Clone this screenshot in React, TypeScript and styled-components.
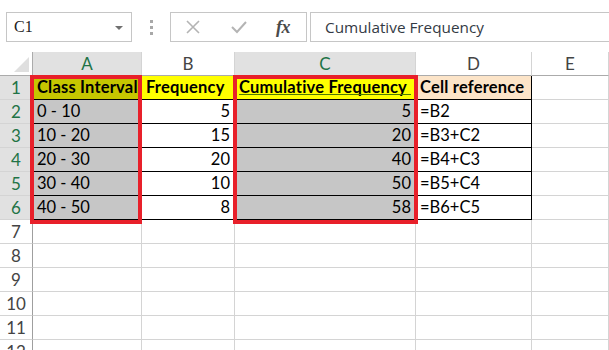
import React from "react";
import styled, { createGlobalStyle, css } from "styled-components";

const GlobalStyle = createGlobalStyle`
  html, body {
    margin: 0;
    padding: 0;
    background: #ffffff;
    overflow: hidden;
  }
  body {
    font-family: Lato, "Liberation Sans", sans-serif;
  }
`;

type Row = { interval: string; freq: number; cum: number; ref: string };

const rows: Row[] = [
  { interval: "0 - 10", freq: 5, cum: 5, ref: "=B2" },
  { interval: "10 - 20", freq: 15, cum: 20, ref: "=B3+C2" },
  { interval: "20 - 30", freq: 20, cum: 40, ref: "=B4+C3" },
  { interval: "30 - 40", freq: 10, cum: 50, ref: "=B5+C4" },
  { interval: "40 - 50", freq: 8, cum: 58, ref: "=B6+C5" },
];

const columns = ["A", "B", "C", "D", "E"];
const selectedCols = ["A", "C"];
const TOTAL_ROWS = 12;

const App = () => {
  return (
    <Page>
      <GlobalStyle />
      <FormulaBar>
        <NameBox>
          <span>C1</span>
          <DropArrow />
        </NameBox>
        <Grip>
          <i />
          <i />
          <i />
        </Grip>
        <Buttons>
          <svg width="16" height="16" viewBox="0 0 16 16">
            <path d="M2 2 L14 14 M14 2 L2 14" stroke="#b4b4b4" strokeWidth="1.6" fill="none" />
          </svg>
          <svg width="18" height="16" viewBox="0 0 18 16">
            <path d="M2 8 L7 13 L16 3" stroke="#b4b4b4" strokeWidth="2" fill="none" />
          </svg>
          <Fx>fx</Fx>
        </Buttons>
        <FormulaInput>Cumulative Frequency</FormulaInput>
      </FormulaBar>

      <Sheet>
        <Grid>
          <Corner />
          {columns.map((c) => (
            <ColHead key={c} $selected={selectedCols.includes(c)}>
              {c}
            </ColHead>
          ))}

          <RowHead $selected>1</RowHead>
          <Cell $bg="#c6c600" $bold $boxed>Class Interval</Cell>
          <Cell $bg="#ffff00" $bold $boxed>Frequency</Cell>
          <Cell $bg="#ffff00" $bold $boxed $underline>Cumulative Frequency</Cell>
          <Cell $bg="#fce4c8" $bold $boxed>Cell reference</Cell>
          <Cell />

          {rows.map((r, i) => (
            <React.Fragment key={r.ref}>
              <RowHead $selected>{i + 2}</RowHead>
              <Cell $bg="#c6c6c6" $boxed>{r.interval}</Cell>
              <Cell $boxed $right>{r.freq}</Cell>
              <Cell $bg="#c6c6c6" $boxed $right>{r.cum}</Cell>
              <Cell $boxed>{r.ref}</Cell>
              <Cell />
            </React.Fragment>
          ))}

          {Array.from({ length: TOTAL_ROWS - 6 }, (_, i) => (
            <React.Fragment key={i}>
              <RowHead>{i + 7}</RowHead>
              <Cell />
              <Cell />
              <Cell />
              <Cell />
              <Cell />
            </React.Fragment>
          ))}
        </Grid>
        <SelectionBox style={{ left: 30, width: 112 }} />
        <SelectionBox style={{ left: 233, width: 185 }} />
      </Sheet>
    </Page>
  );
};

export default App;

const Page = styled.div`
  width: 609px;
  height: 350px;
  overflow: hidden;
  background: #ffffff;
`;

const FormulaBar = styled.div`
  display: flex;
  align-items: center;
  height: 30px;
  padding: 12px 0 0 6px;
  margin-bottom: 10px;
`;

const NameBox = styled.div`
  box-sizing: border-box;
  width: 126px;
  height: 30px;
  border: 1px solid #c6c6c6;
  display: flex;
  align-items: center;
  justify-content: space-between;
  padding: 0 8px 0 7px;
  font-family: "Liberation Serif", serif;
  font-size: 16px;
  color: #222;
`;

const DropArrow = styled.span`
  width: 0;
  height: 0;
  border-left: 4px solid transparent;
  border-right: 4px solid transparent;
  border-top: 4px solid #707070;
  margin-top: 2px;
`;

const Grip = styled.div`
  width: 38px;
  display: flex;
  flex-direction: column;
  align-items: center;
  gap: 3px;
  & > i {
    width: 3px;
    height: 3px;
    background: #a8a8a8;
  }
`;

const Buttons = styled.div`
  box-sizing: border-box;
  width: 137px;
  height: 30px;
  border: 1px solid #c6c6c6;
  display: flex;
  align-items: center;
  padding: 0 16px 0 14px;
  justify-content: space-between;
`;

const Fx = styled.span`
  font-family: "Liberation Serif", serif;
  font-style: italic;
  font-weight: 700;
  font-size: 18px;
  color: #4a4a4a;
  letter-spacing: -0.5px;
`;

const FormulaInput = styled.div`
  box-sizing: border-box;
  flex: 1;
  height: 30px;
  margin-left: 3px;
  margin-right: -4px;
  border: 1px solid #c6c6c6;
  display: flex;
  align-items: center;
  padding-left: 14px;
  font-family: "Open Sans", sans-serif;
  font-size: 15.3px;
  color: #333a44;
`;

const Sheet = styled.div`
  position: relative;
`;

const Grid = styled.div`
  display: grid;
  grid-template-columns: 33px 109px 93px 181px 116px 1fr;
  grid-auto-rows: 24px;
`;

const Corner = styled.div`
  box-sizing: border-box;
  position: relative;
  border-right: 1px solid #ababab;
  border-bottom: 1px solid #ababab;
  background: #ffffff;
  &::after {
    content: "";
    position: absolute;
    right: 3px;
    bottom: 3px;
    width: 0;
    height: 0;
    border-left: 15px solid transparent;
    border-bottom: 15px solid #dfdfdf;
  }
`;

const ColHead = styled.div<{ $selected?: boolean }>`
  box-sizing: border-box;
  display: flex;
  align-items: center;
  justify-content: center;
  border-right: 1px solid #d4d4d4;
  border-bottom: 1px solid #ababab;
  font-size: 17px;
  background: ${(p) => (p.$selected ? "#e1e1e1" : "#ffffff")};
  color: ${(p) => (p.$selected ? "#217346" : "#444444")};
`;

const RowHead = styled.div<{ $selected?: boolean }>`
  box-sizing: border-box;
  display: flex;
  align-items: center;
  justify-content: center;
  border-right: 1px solid #9f9f9f;
  border-bottom: 1px solid #d4d4d4;
  font-size: 17px;
  background: ${(p) => (p.$selected ? "#e1e1e1" : "#ffffff")};
  color: ${(p) => (p.$selected ? "#217346" : "#444444")};
`;

const Cell = styled.div<{
  $bg?: string;
  $bold?: boolean;
  $boxed?: boolean;
  $right?: boolean;
  $underline?: boolean;
}>`
  box-sizing: border-box;
  position: relative;
  display: flex;
  align-items: flex-end;
  justify-content: ${(p) => (p.$right ? "flex-end" : "flex-start")};
  padding: 0 4px 2px 4px;
  font-size: 16.5px;
  line-height: 20px;
  white-space: nowrap;
  overflow: hidden;
  color: #000;
  font-weight: ${(p) => (p.$bold ? 700 : 400)};
  letter-spacing: ${(p) => (p.$bold ? "0.2px" : "0")};
  background: ${(p) => p.$bg ?? "#ffffff"};
  border-right: 1px solid ${(p) => (p.$boxed ? "#000" : "#d4d4d4")};
  border-bottom: 1px solid ${(p) => (p.$boxed ? "#000" : "#d4d4d4")};
  ${(p) =>
    p.$underline &&
    css`
      &::after {
        content: "";
        position: absolute;
        left: 4px;
        right: 4px;
        bottom: 4px;
        height: 1px;
        background: #4f7a00;
      }
    `}
`;

const SelectionBox = styled.div`
  position: absolute;
  top: 23px;
  height: 149px;
  box-sizing: border-box;
  border: 4px solid #e8202a;
  pointer-events: none;
`;
